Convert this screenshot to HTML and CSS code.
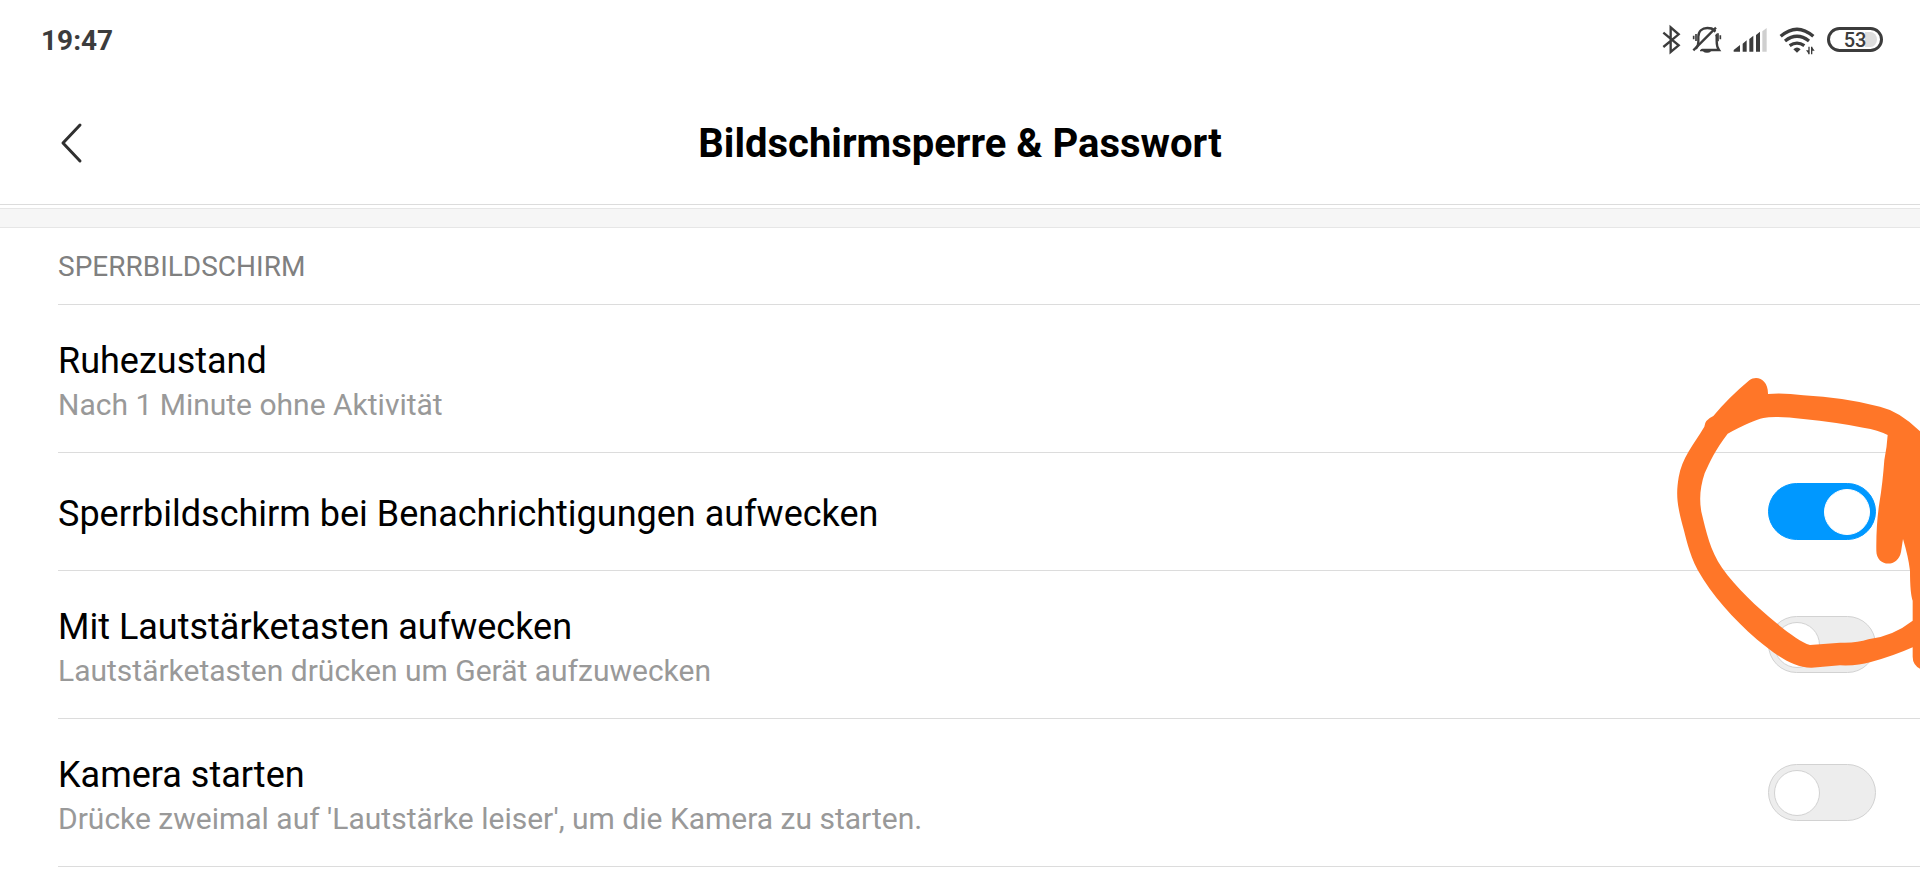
FILE: index.html
```html
<!DOCTYPE html>
<html lang="de">
<head>
<meta charset="utf-8">
<title>Bildschirmsperre &amp; Passwort</title>
<link rel="stylesheet" href="styles.css">
</head>
<body>
<div class="screen">
  <div class="status">
    <time class="clock">19:47</time>
    <div class="indicators">
      <svg class="icons" viewBox="60 40 471 93" aria-hidden="true">
        <g fill="none" stroke="#3c3c3c" stroke-width="7">
          <path d="M70 66 L116 104 L92 124 V50 L116 71 L70 109"/>
          <path d="M180 118 H237 C231 110 230 104 230 92 V78 C230 60 218 52 202 52 C186 52 175 62 175 78 V94 C175 104 172 110 167 114"/>
          <path stroke="#fff" stroke-width="7" d="M168 126 L236 58"/>
          <path d="M160 119 L228 51"/>
          <path d="M168 70 V91 M161 75 V86 M234 68 V92 M241 74 V86" stroke-width="5"/>
        </g>
        <path fill="#3c3c3c" d="M187 120 H215 Q201 133 187 120 Z M281 123 V118 L300 103 V123 Z M308 123 V99 L320 89 V123 Z M328 123 V85 L340 75 V123 Z M348 123 V73 L360 63 V123 Z"/>
        <path fill="#cfcfcf" d="M367 123 V62 L380 52 V123 Z"/>
        <g fill="none" stroke="#3c3c3c" stroke-width="10">
          <path d="M422 77 Q471 34 520 77"/>
          <path d="M435 91 Q471 63 507 91"/>
          <path d="M449 105 Q471 90 493 105"/>
        </g>
        <path fill="none" stroke="#3c3c3c" stroke-width="4" d="M507 108 V131 M515 108 V131"/>
        <path fill="#3c3c3c" d="M460 116 Q471 105 482 116 L471 126 Z M507 131 L498 119 H507 Z M515 108 L524 120 H515 Z"/>
      </svg>
      <span class="battery">53</span>
    </div>
  </div>

  <header class="bar">
    <button class="back" type="button" aria-label="Zurück">
      <svg class="chevron" viewBox="0 0 24 42" aria-hidden="true"><path d="M21 3 L4 21 L21 39"/></svg>
    </button>
    <h1 class="heading">Bildschirmsperre &amp; Passwort</h1>
  </header>
  <div class="band"></div>

  <main class="list">
    <h2 class="section">SPERRBILDSCHIRM</h2>
    <div class="row">
      <div class="text">
        <span class="title">Ruhezustand</span>
        <span class="sub">Nach 1 Minute ohne Aktivität</span>
      </div>
    </div>
    <label class="row">
      <span class="text"><span class="title">Sperrbildschirm bei Benachrichtigungen aufwecken</span></span>
      <input class="switch" type="checkbox" role="switch" checked>
    </label>
    <label class="row">
      <span class="text">
        <span class="title">Mit Lautstärketasten aufwecken</span>
        <span class="sub">Lautstärketasten drücken um Gerät aufzuwecken</span>
      </span>
      <input class="switch" type="checkbox" role="switch">
    </label>
    <label class="row">
      <span class="text">
        <span class="title">Kamera starten</span>
        <span class="sub">Drücke zweimal auf 'Lautstärke leiser', um die Kamera zu starten.</span>
      </span>
      <input class="switch" type="checkbox" role="switch">
    </label>
  </main>

  <!-- Hand-drawn marker around the active switch -->
  <svg class="marker" viewBox="0 0 780 930" aria-hidden="true">
    <path fill-rule="evenodd" d="M133 170 Q134 150 160 138 Q207 82 268 31 C292 14 325 30 324 72 Q370 68 430 76 Q550 82 660 110 Q720 124 780 184 V896 Q758 884 758 860 V832 Q700 858 630 877 Q595 888 540 886 L455 893 C400 894 340 850 290 808 C220 746 155 675 113 600 C85 545 79 505 68 467 C50 400 48 370 56 322 C65 265 100 225 133 170 Z M203 191 C165 240 150 275 134 310 C121 350 117 385 124 425 C140 490 150 540 186 593 C230 655 290 710 350 760 C390 792 425 817 450 825 L540 818 Q590 820 625 808 Q700 798 758 752 V692 Q750 670 750 602 Q745 560 729 507 L723 546 C714 595 649 591 649 542 Q648 465 658 400 Q668 340 673 270 Q681 230 683 195 Q655 180 610 173 Q530 157 430 147 Q345 137 310 144 Q275 152 203 191 Z"/>
  </svg>
</div>
</body>
</html>
```
FILE: styles.css
```css
*,
*::before {
  box-sizing: border-box;
}

body {
  margin: 0;
  background: #fff;
  color: #000;
  font-family: Roboto, "Liberation Sans", sans-serif;
}

.screen {
  position: relative;
  overflow: hidden;
}

.status {
  display: flex;
  align-items: center;
  justify-content: space-between;
  height: 78px;
  padding: 0 37px 0 41px;
}

.clock {
  padding-top: 3px;
  color: #3c3c3c;
  font-size: 28px;
  font-weight: 700;
}

.indicators {
  display: flex;
  align-items: center;
  gap: 10px;
}

.icons {
  width: 157px;
  height: 31px;
}

.battery {
  width: 56px;
  height: 25px;
  padding: 2px 3px;
  border: 3px solid #3c3c3c;
  border-radius: 13px;
  background: linear-gradient(to right, #fff 32px, #ddd 32px) content-box;
  color: #3c3c3c;
  font-size: 20px;
  font-weight: 500;
  line-height: 17px;
  text-align: center;
}

.bar {
  display: grid;
  grid-template-columns: 120px 1fr 120px;
  align-items: center;
  height: 127px;
  padding-top: 3px;
  border-bottom: 1px solid #dcdcdc;
}

.back {
  padding: 0 0 0 59px;
  border: 0;
  background: none;
  text-align: left;
}

.chevron {
  display: block;
  width: 24px;
  height: 42px;
  fill: none;
  stroke: #303030;
  stroke-width: 3;
  stroke-linecap: round;
  stroke-linejoin: round;
}

.heading {
  margin: 0;
  padding-top: 2px;
  font-size: 40px;
  font-weight: 700;
  text-align: center;
}

.band {
  height: 20px;
  margin-top: 3px;
  border: 1px solid #e6e6e6;
  border-width: 1px 0;
  background: #f6f6f6;
}

.list {
  padding-left: 58px;
}

.section {
  margin: 0;
  padding-top: 2px;
  border-bottom: 1px solid #dcdcdc;
  color: #808080;
  font-size: 28px;
  font-weight: 400;
  line-height: 74px;
}

.row {
  display: flex;
  align-items: center;
  justify-content: space-between;
  min-height: 118px;
  padding: 27px 44px 27px 0;
  border-bottom: 1px solid #dcdcdc;
}

.text {
  padding-top: 5px;
}

.title,
.sub {
  display: block;
}

.title {
  font-size: 36px;
  line-height: 48px;
}

.sub {
  color: #999;
  font-size: 30px;
  line-height: 40px;
}

.switch {
  appearance: none;
  display: flex;
  align-items: center;
  flex: none;
  width: 108px;
  height: 57px;
  margin: 0;
  padding: 0 5px;
  border: 1px solid #d2d2d2;
  border-radius: 29px;
  background: #ededed;
}

.switch::before {
  content: "";
  width: 46px;
  height: 46px;
  border: 1px solid #d2d2d2;
  border-radius: 50%;
  background: #fff;
}

.switch:checked {
  justify-content: flex-end;
  border-color: #0098ff;
  background: #0098ff;
}

.switch:checked::before {
  border-color: #fff;
}

.marker {
  position: absolute;
  top: 370px;
  right: 0;
  width: 260px;
  height: 310px;
  fill: #ff7628;
  pointer-events: none;
}
```
